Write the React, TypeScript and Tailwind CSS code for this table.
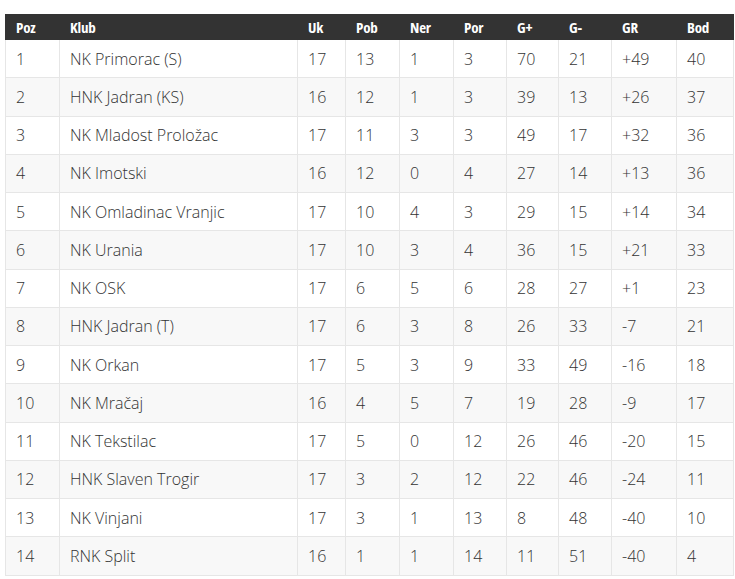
import React from 'react';

const headers = ['Poz', 'Klub', 'Uk', 'Pob', 'Ner', 'Por', 'G+', 'G-', 'GR', 'Bod'];

const rows: (string | number)[][] = [
  [1, 'NK Primorac (S)', 17, 13, 1, 3, 70, 21, '+49', 40],
  [2, 'HNK Jadran (KS)', 16, 12, 1, 3, 39, 13, '+26', 37],
  [3, 'NK Mladost Proložac', 17, 11, 3, 3, 49, 17, '+32', 36],
  [4, 'NK Imotski', 16, 12, 0, 4, 27, 14, '+13', 36],
  [5, 'NK Omladinac Vranjic', 17, 10, 4, 3, 29, 15, '+14', 34],
  [6, 'NK Urania', 17, 10, 3, 4, 36, 15, '+21', 33],
  [7, 'NK OSK', 17, 6, 5, 6, 28, 27, '+1', 23],
  [8, 'HNK Jadran (T)', 17, 6, 3, 8, 26, 33, '-7', 21],
  [9, 'NK Orkan', 17, 5, 3, 9, 33, 49, '-16', 18],
  [10, 'NK Mračaj', 16, 4, 5, 7, 19, 28, '-9', 17],
  [11, 'NK Tekstilac', 17, 5, 0, 12, 26, 46, '-20', 15],
  [12, 'HNK Slaven Trogir', 17, 3, 2, 12, 22, 46, '-24', 11],
  [13, 'NK Vinjani', 17, 3, 1, 13, 8, 48, '-40', 10],
  [14, 'RNK Split', 16, 1, 1, 14, 11, 51, '-40', 4],
];

const cols = 'grid grid-cols-[54px_238px_48px_54px_54px_53px_52px_53px_65px_58px]';

const App: React.FC = () => {
  return (
    <div className="min-h-screen bg-white pl-[5px] pt-[13.5px] font-['Open_Sans',sans-serif] text-[#333]">
      <div className="w-[729px]">
        {/* Header */}
        <div className={`${cols} h-[26.5px] bg-[#333] text-white`}>
          {headers.map((h) => (
            <div
              key={h}
              className="flex items-center pl-[11px] text-[15px] font-bold tracking-[-0.2px] font-stretch-condensed"
            >
              {h}
            </div>
          ))}
        </div>

        {/* Body */}
        {rows.map((r, i) => (
          <div
            key={i}
            className={`${cols} h-[38.25px] border-b border-[#e6e6e6] ${i % 2 === 1 ? 'bg-[#f8f8f8]' : 'bg-white'}`}
          >
            {r.map((c, j) => (
              <div
                key={j}
                className={`flex items-center pl-[10px] text-[16px] font-light border-l border-[#e6e6e6] ${j === 9 ? 'border-r' : ''}`}
              >
                {c}
              </div>
            ))}
          </div>
        ))}
      </div>
    </div>
  );
};

export default App;
